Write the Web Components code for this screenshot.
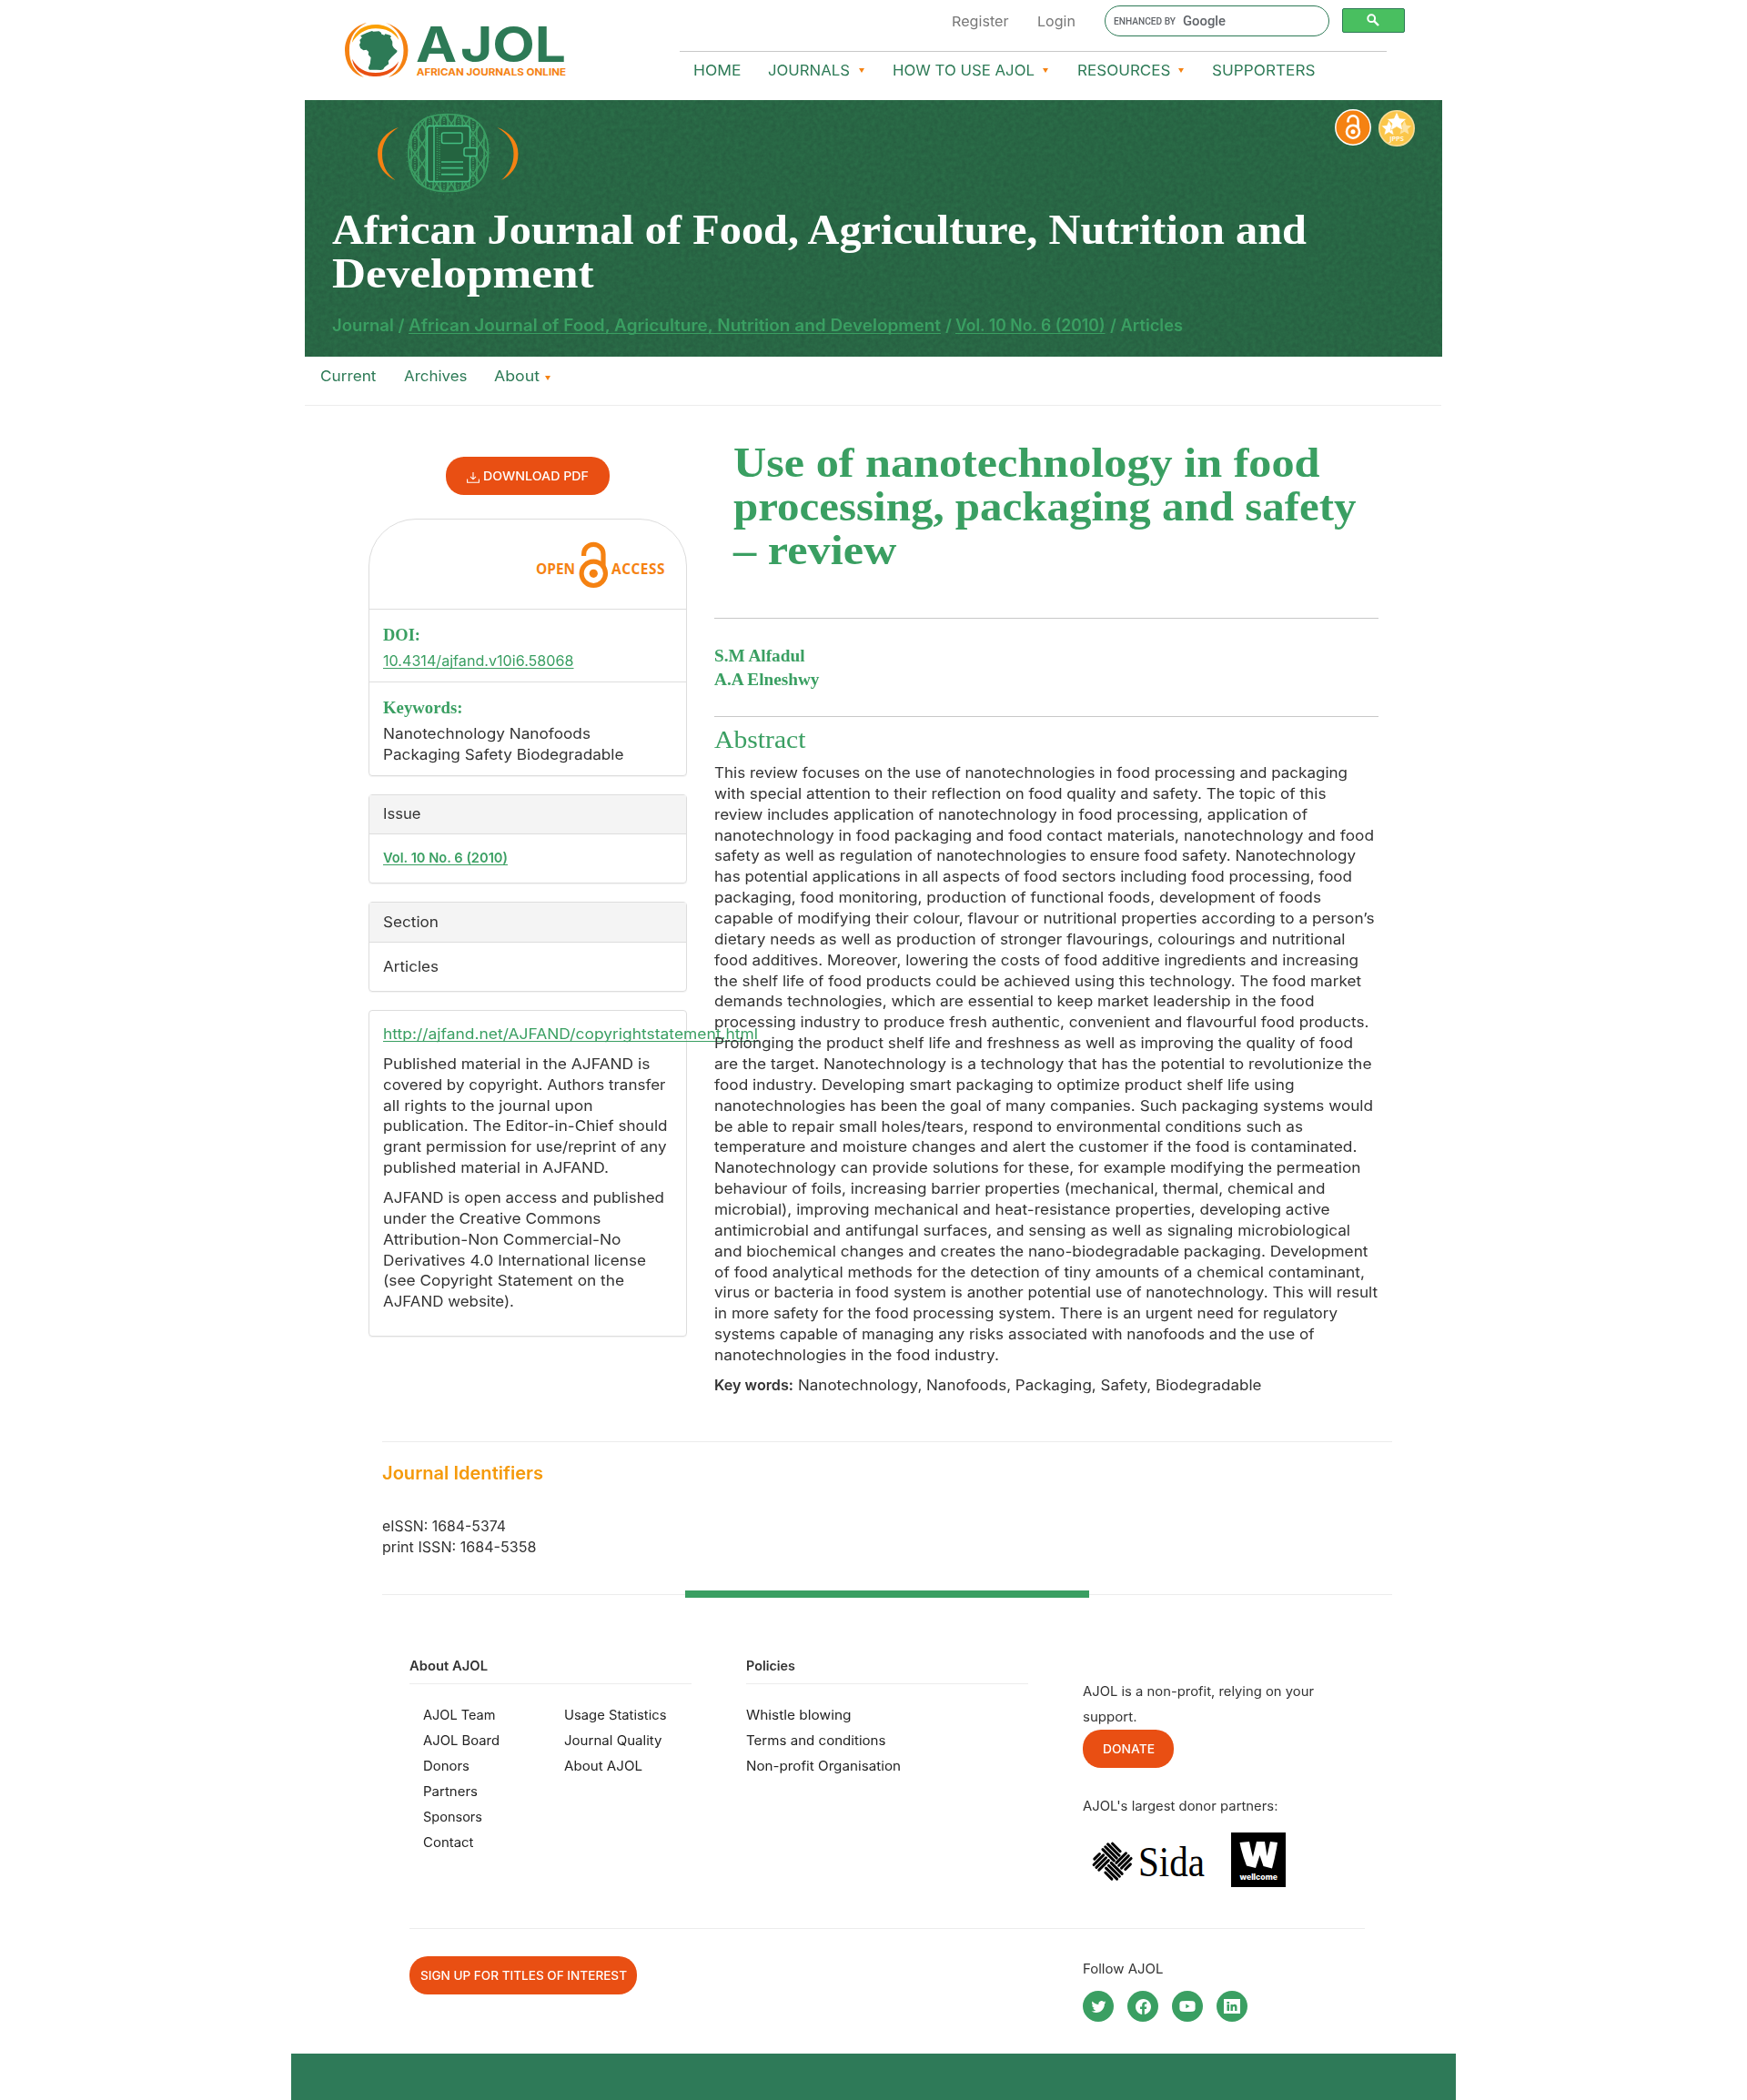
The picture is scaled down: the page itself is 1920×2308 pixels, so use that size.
<!DOCTYPE html>
<html lang="en">
<head>
<meta charset="utf-8">
<title>Use of nanotechnology in food processing, packaging and safety – review</title>
<style>
body{margin:0;background:#fff;font-family:Inter,"Open Sans",sans-serif;font-size:16px;color:#333}
aj-page{--green:#2d7a56;--leaf:#3a9f62;--orange:#f58212;--red:#e94f13;--rule:#ececec;--serif:"Liberation Serif",serif}
</style>
</head>
<body>
<aj-page></aj-page>
<script>
function component(name, html, after) {
  const tpl = document.createElement('template');
  tpl.innerHTML = html;
  customElements.define(name, class extends HTMLElement {
    constructor() {
      super();
      this.attachShadow({mode: 'open'}).appendChild(tpl.content.cloneNode(true));
    }
    connectedCallback() { if (after) after(this, this.shadowRoot); }
  });
}
const lines = (rows) => rows.map(([w, t]) => `<aj-line w="${w}">${t}</aj-line>`).join('');

component('aj-page', `
<style>:host{display:block;width:1280px;height:2308px;margin:0 auto;overflow:hidden}</style>
<aj-header></aj-header><aj-banner></aj-banner><aj-submenu></aj-submenu>
<aj-main></aj-main><aj-identifiers></aj-identifiers><aj-footer></aj-footer>`);

component('aj-logo', `
<style>:host{display:block;width:243px;height:60px}svg{display:block;overflow:visible}</style>
<svg width="243" height="60" viewBox="145 75 595 180" preserveAspectRatio="none">
<g fill="#f58212"><path d="M204 75C165 87 145 125 145 166C145 210 165 245 196 255C170 235 157 205 157 166C157 120 175 92 204 75Z"/>
<path d="M255 75C295 90 315 125 315 166C315 210 295 245 262 255C290 235 303 205 303 166C303 125 285 92 255 75Z"/></g>
<path fill="#fba003" d="M164 141C170 100 198 81 228 81C258 81 286 103 290 131C275 105 255 94 228 94C200 94 178 112 164 141Z"/>
<path fill="#e94f13" d="M165 194C178 225 200 240 228 240C258 240 280 222 290 202C283 234 260 252 228 252C195 252 168 232 165 194Z"/>
<path fill="#2d7a56" d="M187 118L203 109L218 102L222 104L237 103L243 108L243 112L251 116L254 112L267 116L270 121L267 124L273 137L273 150L277 158L286 167L285 172L271 188L262 201L263 211L252 221L248 229L242 231L230 230L211 230L208 224L213 209L215 190L208 180L209 171L203 164L195 166L187 159L184 148L187 140L185 132L191 124Z"/>
<text x="336" y="203" font-family="Inter,sans-serif" font-weight="700" font-size="160" fill="#2d7a56" textLength="404" lengthAdjust="spacingAndGlyphs">A<tspan dx="10">JOL</tspan></text>
<text x="338" y="248" font-family="Inter,sans-serif" font-weight="700" font-size="32" fill="#f58212" textLength="402" lengthAdjust="spacingAndGlyphs">AFRICAN JOURNALS ONLINE</text>
</svg>`);

component('aj-caret', `<style>:host{display:block;width:0;height:0;border:3.5px solid transparent;border-top:5px solid var(--orange);border-bottom:0}</style>`);

component('aj-header', `
<style>
:host{display:flex;height:110px}
aj-logo{margin:25px 0 0 59px}
.right{width:797px;margin-left:125px}
.top{display:flex;align-items:center;height:34px;padding:6px 0 16px 298.500px;font-size:15px;color:#777}
.search{box-sizing:border-box;width:247px;height:34px;margin:0 14px 0 31.500px;border:1px solid var(--green);border-radius:18px;display:flex;align-items:center;padding-left:9px;gap:8px;font:500 10.3px Roboto;color:#5f6368}
.search .g{font-size:15.5px}
.btn{box-sizing:border-box;width:69px;height:27px;margin-top:-2px;background:#49bf60;border:1px solid var(--green);border-radius:2px;display:flex;align-items:center;justify-content:center}
.rule{width:777px;height:1px;background:#c8c8c8}
nav{display:flex;align-items:center;height:39px;padding-left:15px;color:var(--green)}
aj-caret{margin:2px 0 0 10px}
</style>
<aj-logo></aj-logo>
<div class="right">
<div class="top"><aj-line w="62.6">Register</aj-line><aj-line w="42" style="margin-left:32.4px">Login</aj-line>
<div class="search"><aj-line w="68">ENHANCED BY</aj-line><aj-line class="g" w="47">Google</aj-line></div>
<div class="btn"><svg width="14" height="14" viewBox="0 0 14 14" fill="none" stroke="#fff"><circle cx="5.2" cy="5.2" r="3.9" stroke-width="2"/><path d="M8 8l5 5" stroke-width="2.4"/></svg></div></div>
<div class="rule"></div>
<nav><aj-line w="52.500">HOME</aj-line>
<aj-line w="90" style="margin-left:29.5px">JOURNALS</aj-line><aj-caret></aj-caret>
<aj-line w="156" style="margin-left:30.5px">HOW TO USE AJOL</aj-line><aj-caret style="margin-left:9px"></aj-caret>
<aj-line w="102.500" style="margin-left:32px">RESOURCES</aj-line><aj-caret style="margin-left:9px"></aj-caret>
<aj-line w="113.500" style="margin-left:31px">SUPPORTERS</aj-line></nav>
</div>`);

component('aj-journal-mark', `
<style>:host{display:block;width:160px;height:92px}svg{display:block;overflow:visible}</style>
<svg width="160" height="92" viewBox="413 122 160 92">
<defs><pattern id="w" width="16" height="22" patternUnits="userSpaceOnUse" x="0" y="4">
<path d="M0 0Q9 11 0 22M16 0Q7 11 16 22M8 -11Q17 0 8 11M8 -11Q-1 0 8 11M8 11Q17 22 8 33M8 11Q-1 22 8 33" fill="none" stroke="#3c9f64" stroke-width="1.4"/>
<path d="M8 1v20M4 0v22M12 0v22" stroke="#3a9c61" stroke-width="1.6" stroke-dasharray="1.3 1.1"/></pattern></defs>
<path fill="#f58212" d="M438 140C424 145 415 155 415 169C415 183 423 193 434.500 198C425 191 420 182 420 169C420 156 427 147 438 140ZM546.500 140C560 145 569.500 155 569.500 169C569.500 184 561 193 551 198C560 190 564.500 181 564.500 169C564.500 156 558 147 546.500 140Z"/>
<path d="M492.500 125.500C525 125.500 536.500 140 536.500 168C536.500 197 523 210.500 492.500 210.500C462 210.500 449 197 449 168C449 140 461 125.500 492.500 125.500Z" fill="url(#w)" stroke="#3ba064" stroke-width="1.7"/>
<ellipse cx="492.500" cy="168" rx="46" ry="46" fill="none" stroke="#3ba064" stroke-width="1.500" stroke-dasharray=".7 4.1" opacity=".6"/>
<g fill="#246440" stroke="#43be82" stroke-width="1.500"><rect x="469.500" y="138.500" width="47" height="61" rx="3"/><path d="M477 139v60"/><rect x="485.500" y="146" width="22.500" height="11.500" rx="2"/><rect x="510" y="162.500" width="14" height="9" rx="2"/></g>
<path d="M485 178h24M485 184.700h24M485 191.700h24" stroke="#43be82" stroke-width="1.700"/>
<path d="M480.500 141v57M483 149v45" stroke="#3ba064" stroke-width="1.500" stroke-dasharray="1 1.500"/>
</svg>`);

component('aj-badges', `
<style>:host{display:flex;gap:8px}svg{display:block}</style>
<svg width="40" height="41" viewBox="0 0 40 41"><circle cx="20" cy="20" r="19.200" fill="#f58212" stroke="#fff" stroke-width="1.500"/>
<g fill="none" stroke="#fff" stroke-width="2.600"><circle cx="20" cy="24.700" r="7"/><path d="M14.500 14.500V12.800a5.500 5.500 0 0 1 11 0V21"/></g><circle cx="20" cy="24.700" r="2.500" fill="#fff"/></svg>
<svg width="40" height="41" viewBox="0 0 40 41"><circle cx="20" cy="21" r="19.200" fill="#fbc64a" stroke="#f9dc98" stroke-width="1.600"/>
<path fill="#fde4a5" d="M28.500 12.500l2.200 5.200 5.600.5-4.200 3.800 1.200 5.600-4.800-2.900-4.900 2.900 1.300-5.600-4.200-3.800 5.500-.5z"/>
<path fill="#fff" stroke="#fbc64a" stroke-width=".6" d="M11.500 12l2.400 5.700 6.100.5-4.600 4.100 1.400 6.300-5.300-3.200-5.300 3.200 1.400-6.300L3 18.200l6.100-.5z"/>
<path fill="#fff" stroke="#fbc64a" stroke-width=".6" d="M20 3l3.100 7 7.600.7-5.700 5.100 1.700 7.500L20 19.400l-6.700 3.900 1.700-7.500-5.700-5.100 7.600-.7z"/>
<text x="12.300" y="34.500" font-family="Open Sans,sans-serif" font-size="7.500" font-weight="600" fill="#fff" textLength="15.500">JPPS</text></svg>`);

component('aj-banner', `
<style>
:host{display:block;position:relative;box-sizing:border-box;width:1250px;height:282px;margin:0 15px;background:#2b7049}
.tex{position:absolute;inset:0}
.in{position:relative;display:flex;flex-direction:column}
.row{display:flex;justify-content:space-between;padding:12px 30px 0 78px;height:91px}
aj-badges{margin-top:-2px}
h1{margin:16px 0 0;padding-left:30px;font:700 46px/48px var(--serif);color:#fff;height:96px}
.crumb{display:flex;padding-left:30px;margin-top:21px;font-size:18px;line-height:24px;font-weight:600;color:var(--leaf)}
</style>
<svg class="tex" width="1250" height="282"><filter id="n" x="0" y="0" width="100%" height="100%" color-interpolation-filters="sRGB"><feTurbulence type="fractalNoise" baseFrequency=".22" numOctaves="4" seed="4"/><feColorMatrix values="0 0 0 0 .13 0 0 0 0 .3 0 0 0 0 .22 .6 .2 0 0 -.12"/></filter><rect width="1250" height="282" filter="url(#n)"/></svg>
<div class="in"><div class="row"><aj-journal-mark></aj-journal-mark><aj-badges></aj-badges></div>
<h1><aj-line w="1071">African Journal of Food, Agriculture, Nutrition and</aj-line><aj-line w="287.500">Development</aj-line></h1>
<div class="crumb"><aj-line w="79.500">Journal /</aj-line><aj-line u w="585" style="margin-left:4.500px">African Journal of Food, Agriculture, Nutrition and Development</aj-line><aj-line w="7" style="margin-left:4.500px">/</aj-line><aj-line u w="164.500" style="margin-left:4.500px">Vol. 10 No. 6 (2010)</aj-line><aj-line w="80" style="margin-left:5px">/ Articles</aj-line></div></div>`);

component('aj-submenu', `
<style>:host{display:flex;box-sizing:border-box;width:1249px;height:54px;margin:0 15px;padding:10px 0 0 17px;border-bottom:1px solid var(--rule);color:var(--green);line-height:22.860px}aj-caret{margin:11px 0 0 6px}</style>
<aj-line w="61.500">Current</aj-line><aj-line w="69.500" style="margin-left:30px">Archives</aj-line><aj-line w="50" style="margin-left:30px">About</aj-line><aj-caret></aj-caret>`);

component('aj-button', `
<style>:host{display:flex;align-items:center;justify-content:center;box-sizing:border-box;height:42px;border-radius:20px;background:var(--red);color:#fff;font-size:13px;line-height:20px;font-weight:500}</style><slot></slot>`);

component('aj-card', `
<style>:host{display:block;box-sizing:border-box;width:350px;border:1px solid #ddd;border-radius:4px;box-shadow:0 1px 1px rgba(0,0,0,.05);line-height:22.860px}</style><slot></slot>`);

component('aj-open-access', `
<style>:host{display:block}svg{display:block}</style>
<svg width="144" height="54" viewBox="588 594 144 54" fill="#f58212"><text x="589" y="630.700" font-family="Open Sans,sans-serif" font-weight="700" font-size="15.400" textLength="43">OPEN</text>
<text x="672" y="630.700" font-family="Open Sans,sans-serif" font-weight="700" font-size="15.400" textLength="58.500">ACCESS</text>
<g fill="none" stroke="#f58212" stroke-width="5.200"><circle cx="652.300" cy="630.300" r="13.200"/><path d="M641.600 611v-2a10.700 10.700 0 0 1 21.400 0v14"/></g><circle cx="652.300" cy="630.300" r="4.600"/></svg>`);

component('aj-sidebar', `
<style>
:host{display:block;width:350px}
.dl{width:180px;margin:56px auto 26px;gap:4px}
.one{height:283px;border-radius:52px 52px 4px 4px}
.oa{border-bottom:1px solid #ddd;display:flex;justify-content:flex-end;padding-right:22px;box-sizing:border-box;height:99px}
.oa aj-open-access{margin-top:23px}
.sec{box-sizing:border-box;height:80px;border-bottom:1px solid #ddd;padding:14.600px 15px 0;}
.sec:last-child{border:0}
h4{margin:0 0 4.200px;font:700 18.500px/26px var(--serif);color:var(--leaf)}
.link{color:var(--leaf)}
.two{margin-top:20px;height:98px}.three{margin-top:20px;height:99px}
.head{height:41px;padding-bottom:1px;display:flex;align-items:center;padding-left:15px;background:#f4f4f4;border-bottom:1px solid #ddd}
.three .head{height:42px}
.body{height:53px;display:flex;align-items:center;padding-left:15px}
.three .body{height:52px}
.four{margin-top:20px;height:359px;padding:14px 15px 0}
.four div{margin-top:10px}
</style>
<aj-button class="dl"><svg width="14" height="12" viewBox="0 0 14 12" fill="none" stroke="#fff" stroke-width="1.100" style="margin-top:3px"><path d="M.6 7.500v3.800h12.800V7.500M7 0v7.500M4 4.800l3 3 3-3"/></svg><aj-line w="116">DOWNLOAD PDF</aj-line></aj-button>
<aj-card class="one"><div class="oa"><aj-open-access></aj-open-access></div>
<div class="sec"><h4><aj-line w="41">DOI:</aj-line></h4><aj-line u class="link" w="209.500">10.4314/ajfand.v10i6.58068</aj-line></div>
<div class="sec"><h4><aj-line w="87.500">Keywords:</aj-line></h4><aj-line w="228">Nanotechnology Nanofoods</aj-line><aj-line w="264.500">Packaging Safety Biodegradable</aj-line></div></aj-card>
<aj-card class="two"><div class="head"><aj-line w="41.500">Issue</aj-line></div><div class="body"><aj-line u class="link" w="137" style="font-weight:600;font-size:15px">Vol. 10 No. 6 (2010)</aj-line></div></aj-card>
<aj-card class="three"><div class="head"><aj-line w="61">Section</aj-line></div><div class="body"><aj-line w="61">Articles</aj-line></div></aj-card>
<aj-card class="four"><aj-line u class="link" w="412">http://ajfand.net/AJFAND/copyrightstatement.html</aj-line>
<div>${lines([[293.5,'Published material in the AJFAND is'],[310.5,'covered by copyright. Authors transfer'],[230.5,'all rights to the journal upon'],[312.5,'publication. The Editor-in-Chief should'],[311.5,'grant permission for use/reprint of any'],[248,'published material in AJFAND.']])}</div>
<div>${lines([[309,'AJFAND is open access and published'],[239.5,'under the Creative Commons'],[261.5,'Attribution-Non Commercial-No'],[289,'Derivatives 4.0 International license'],[265,'(see Copyright Statement on the'],[144,'AJFAND website).']])}</div></aj-card>`);

component('aj-article', `
<style>
:host{display:block;width:730px;line-height:22.860px}
h1{margin:39px 0 50px 20.500px;font:700 46px/48px var(--serif);color:var(--leaf)}
hr{margin:0;border:0;height:1px;background:#c8c8c8}
.authors{margin:28px 0 27px;font:700 18.500px/26px var(--serif);color:var(--leaf)}
h2{margin:10px 0 10px;font:400 27.500px/30px var(--serif);color:var(--leaf)}
.kw{display:flex;margin-top:10.500px}
</style>
<h1>${lines([[644.5,'Use of nanotechnology in food'],[684.5,'processing, packaging and safety'],[179.5,'– review']])}</h1><hr>
<div class="authors">${lines([[99.5,'S.M Alfadul'],[115.5,'A.A Elneshwy']])}</div><hr>
<h2><aj-line w="100.500">Abstract</aj-line></h2>
${lines([[696,'This review focuses on the use of nanotechnologies in food processing and packaging'],
[672.5,'with special attention to their reflection on food quality and safety. The topic of this'],
[652,'review includes application of nanotechnology in food processing, application of'],
[725,'nanotechnology in food packaging and food contact materials, nanotechnology and food'],
[705,'safety as well as regulation of nanotechnologies to ensure food safety. Nanotechnology'],
[701,'has potential applications in all aspects of food sectors including food processing, food'],
[667,'packaging, food monitoring, production of functional foods, development of foods'],
[725.5,'capable of modifying their colour, flavour or nutritional properties according to a person’s'],
[693.5,'dietary needs as well as production of stronger flavourings, colourings and nutritional'],
[708,'food additives. Moreover, lowering the costs of food additive ingredients and increasing'],
[711,'the shelf life of food products could be achieved using this technology. The food market'],
[659.5,'demands technologies, which are essential to keep market leadership in the food'],
[719.5,'processing industry to produce fresh authentic, convenient and flavourful food products.'],
[702,'Prolonging the product shelf life and freshness as well as improving the quality of food'],
[722.5,'are the target. Nanotechnology is a technology that has the potential to revolutionize the'],
[637.5,'food industry. Developing smart packaging to optimize product shelf life using'],
[724,'nanotechnologies has been the goal of many companies. Such packaging systems would'],
[647,'be able to repair small holes/tears, respond to environmental conditions such as'],
[706.5,'temperature and moisture changes and alert the customer if the food is contaminated.'],
[710.5,'Nanotechnology can provide solutions for these, for example modifying the permeation'],
[671.5,'behaviour of foils, increasing barrier properties (mechanical, thermal, chemical and'],
[676.5,'microbial), improving mechanical and heat-resistance properties, developing active'],
[699,'antimicrobial and antifungal surfaces, and sensing as well as signaling microbiological'],
[718.5,'and biochemical changes and creates the nano-biodegradable packaging. Development'],
[715,'of food analytical methods for the detection of tiny amounts of a chemical contaminant,'],
[729,'virus or bacteria in food system is another potential use of nanotechnology. This will result'],
[685,'in more safety for the food processing system. There is an urgent need for regulatory'],
[659.5,'systems capable of managing any risks associated with nanofoods and the use of'],
[313,'nanotechnologies in the food industry.']])}
<div class="kw"><aj-line w="87" style="font-weight:600">Key words:</aj-line><aj-line w="509.500" style="margin-left:5px">Nanotechnology, Nanofoods, Packaging, Safety, Biodegradable</aj-line></div>`);

component('aj-main', `
<style>:host{display:flex;gap:30px;height:1138px;padding-left:85px}</style>
<aj-sidebar></aj-sidebar><aj-article></aj-article>`);

component('aj-identifiers', `
<style>
:host{display:block;width:1110px;height:173px;box-sizing:border-box;margin-left:100px;border-top:1px solid var(--rule);line-height:22.860px}
h3{margin:0;padding:19px 0 32px;font-size:19.500px;line-height:30px;font-weight:600;color:#f59a0a}
.bar{display:flex;align-items:center;height:9px;margin-top:36.780px}
.bar i{height:1px;background:var(--rule);width:333px}.bar b{width:444px;height:8px;background:var(--leaf);align-self:flex-start}
</style>
<h3><aj-line w="177">Journal Identifiers</aj-line></h3>
<aj-line w="136">eISSN: 1684-5374</aj-line><aj-line w="169.500">print ISSN: 1684-5358</aj-line>
<div class="bar"><i></i><b></b><i></i></div>`);

component('aj-sida', `
<style>:host{display:block}svg{display:block;overflow:visible}</style>
<svg width="126" height="62" viewBox="0 0 126 62">
<g transform="translate(22.600 32) rotate(45)" stroke="#000" stroke-width="3" stroke-linecap="round">
<path d="M-14 -14H-2M-17 -10H.5M-17 -6H.5M-17 -2H.5"/>
<path d="M4 -17V-2M8 -17V-2M12 -17V-2M16 -12V-4"/>
<path d="M0 2H17M0 6H17M0 10H17M3 14H13"/>
<path d="M-16 4V12M-12 2V17M-8 2V17M-4 2V17"/>
</g>
<text x="51" y="47.500" font-family="Liberation Serif,serif" font-size="46.500" textLength="73" lengthAdjust="spacingAndGlyphs">Sida</text></svg>`);

component('aj-wellcome', `
<style>:host{display:block}svg{display:block}</style>
<svg width="60" height="60" viewBox="0 0 60 60"><rect width="60" height="60"/>
<path fill="#fff" d="M9.500 11L20 10Q22 20 24 27L28 10H37L39.500 26L43 10L51 11Q49 25 45 39.500L35.500 37L31.500 25L27 39L17 36.500Q12 24 9.500 11Z"/>
<text x="9.500" y="51.500" font-family="Inter,sans-serif" font-weight="800" font-size="8.500" fill="#fff" textLength="41.500" lengthAdjust="spacingAndGlyphs">wellcome</text></svg>`);

component('aj-social', `
<style>:host{display:flex;gap:15px}span{width:34px;height:34px;border-radius:50%;background:var(--leaf);display:flex;align-items:center;justify-content:center}svg{fill:#fff;display:block}</style>
<span><svg width="17" height="17" viewBox="0 0 16 17"><path d="M5.026 15c6.038 0 9.341-5.003 9.341-9.334 0-.14 0-.282-.006-.422A6.685 6.685 0 0 0 16 3.542a6.658 6.658 0 0 1-1.889.518 3.301 3.301 0 0 0 1.447-1.817 6.533 6.533 0 0 1-2.087.793A3.286 3.286 0 0 0 7.875 6.03a9.325 9.325 0 0 1-6.767-3.429 3.289 3.289 0 0 0 1.018 4.382A3.323 3.323 0 0 1 .64 6.575v.045a3.288 3.288 0 0 0 2.632 3.218 3.203 3.203 0 0 1-.865.115 3.23 3.23 0 0 1-.614-.057 3.283 3.283 0 0 0 3.067 2.277A6.588 6.588 0 0 1 .78 13.58a6.32 6.32 0 0 1-.78-.045A9.344 9.344 0 0 0 5.026 15z"/></svg></span>
<span><svg width="17" height="17" viewBox="0 0 16 16"><path d="M16 8.049c0-4.446-3.582-8.05-8-8.05C3.580 0-.002 3.603-.002 8.050c0 4.017 2.926 7.347 6.750 7.951v-5.625h-2.030V8.050H6.750V6.275c0-2.017 1.195-3.131 3.022-3.131.876 0 1.791.157 1.791.157v1.980h-1.009c-.993 0-1.303.621-1.303 1.258v1.510h2.218l-.354 2.326H9.250V16c3.824-.604 6.750-3.934 6.750-7.951z"/></svg></span>
<span><svg width="18" height="12" viewBox="0 0 18 12"><path fill-rule="evenodd" d="M3 .2Q9-.2 15 .2Q17.500.4 17.600 3V9Q17.500 11.600 15 11.800Q9 12.200 3 11.800Q.5 11.600.4 9V3Q.5.400 3 .2ZM7.300 3.500V8.300L11.500 5.900Z"/></svg></span>
<span><svg width="18" height="16" viewBox="0 0 18 16"><path fill-rule="evenodd" d="M0 0H18V16H0ZM3.500 6V13H6V6ZM3.400 3V5.200H6.100V3ZM7.500 6V13H9.900V9.500Q10 7.900 11 7.900Q12.100 7.900 12.100 9.500V13H14.500V8.800Q14.400 5.800 11.800 5.800Q10.500 5.800 9.900 6.900V6Z"/></svg></span>`);

component('aj-footer', `
<style>
:host{display:block;font-size:14px;line-height:28px}
.cols{display:flex;height:363px;box-sizing:border-box;margin:0 100px 0 130px;border-bottom:1px solid var(--rule)}
.col{flex:none;width:310px;margin-right:60px;padding-top:64px}
h5{margin:0;font-size:14px;line-height:20px;font-weight:600;height:29px;border-bottom:1px solid var(--rule)}
.lists{display:flex;padding-top:20px;color:#222}
.lists div{flex:none;width:155px}
.about{padding-left:15px}
.give{padding-top:88px;width:310px}
.give aj-button{width:100px;margin-bottom:28px}
.logos{display:flex;padding:15px 0 0 10px}
.logos aj-wellcome{margin-left:27px}
.bottom{display:flex;justify-content:space-between;height:137px;padding:30px 0 0 130px;box-sizing:border-box;width:1090px}
.bottom aj-button{width:250px}
.follow{width:220px}
.follow aj-social{margin-top:10px}
.strip{height:51px;background:#2e7a58}
</style>
<div class="cols">
<div class="col"><h5><aj-line w="86">About AJOL</aj-line></h5><div class="lists about"><div>${lines([[79.5,'AJOL Team'],[84,'AJOL Board'],[51,'Donors'],[60,'Partners'],[65,'Sponsors'],[55.5,'Contact']])}</div><div>${lines([[112.5,'Usage Statistics'],[107.5,'Journal Quality'],[86,'About AJOL']])}</div></div></div>
<div class="col"><h5><aj-line w="54">Policies</aj-line></h5><div class="lists"><div>${lines([[115.5,'Whistle blowing'],[153.5,'Terms and conditions'],[170,'Non-profit Organisation']])}</div></div></div>
<div class="give">${lines([[254,'AJOL is a non-profit, relying on your'],[59.5,'support.']])}<aj-button><aj-line w="57">DONATE</aj-line></aj-button><aj-line w="214.500">AJOL's largest donor partners:</aj-line>
<div class="logos"><aj-sida></aj-sida><aj-wellcome></aj-wellcome></div></div>
</div>
<div class="bottom"><aj-button><aj-line w="227">SIGN UP FOR TITLES OF INTEREST</aj-line></aj-button>
<div class="follow"><aj-line w="88.500">Follow AJOL</aj-line><aj-social></aj-social></div></div>
<div class="strip"></div>`);

/* One line of type, widened so that it sets to the measure given in w. */
component('aj-line', `
<style>:host{display:block;flex:none;white-space:nowrap}span{display:inline-block;vertical-align:top;transform-origin:0 50%}:host([u]) span{text-decoration:underline;text-decoration-thickness:1px;text-underline-offset:2px;text-decoration-skip-ink:none}</style><span><slot></slot></span>`,
(host, root) => {
  const span = root.querySelector('span'), w = parseFloat(host.getAttribute('w'));
  host.style.width = w + 'px';
  span.style.transform = 'none';
  span.style.transform = `scaleX(${w / span.getBoundingClientRect().width})`;
});
</script>
</body>
</html>
